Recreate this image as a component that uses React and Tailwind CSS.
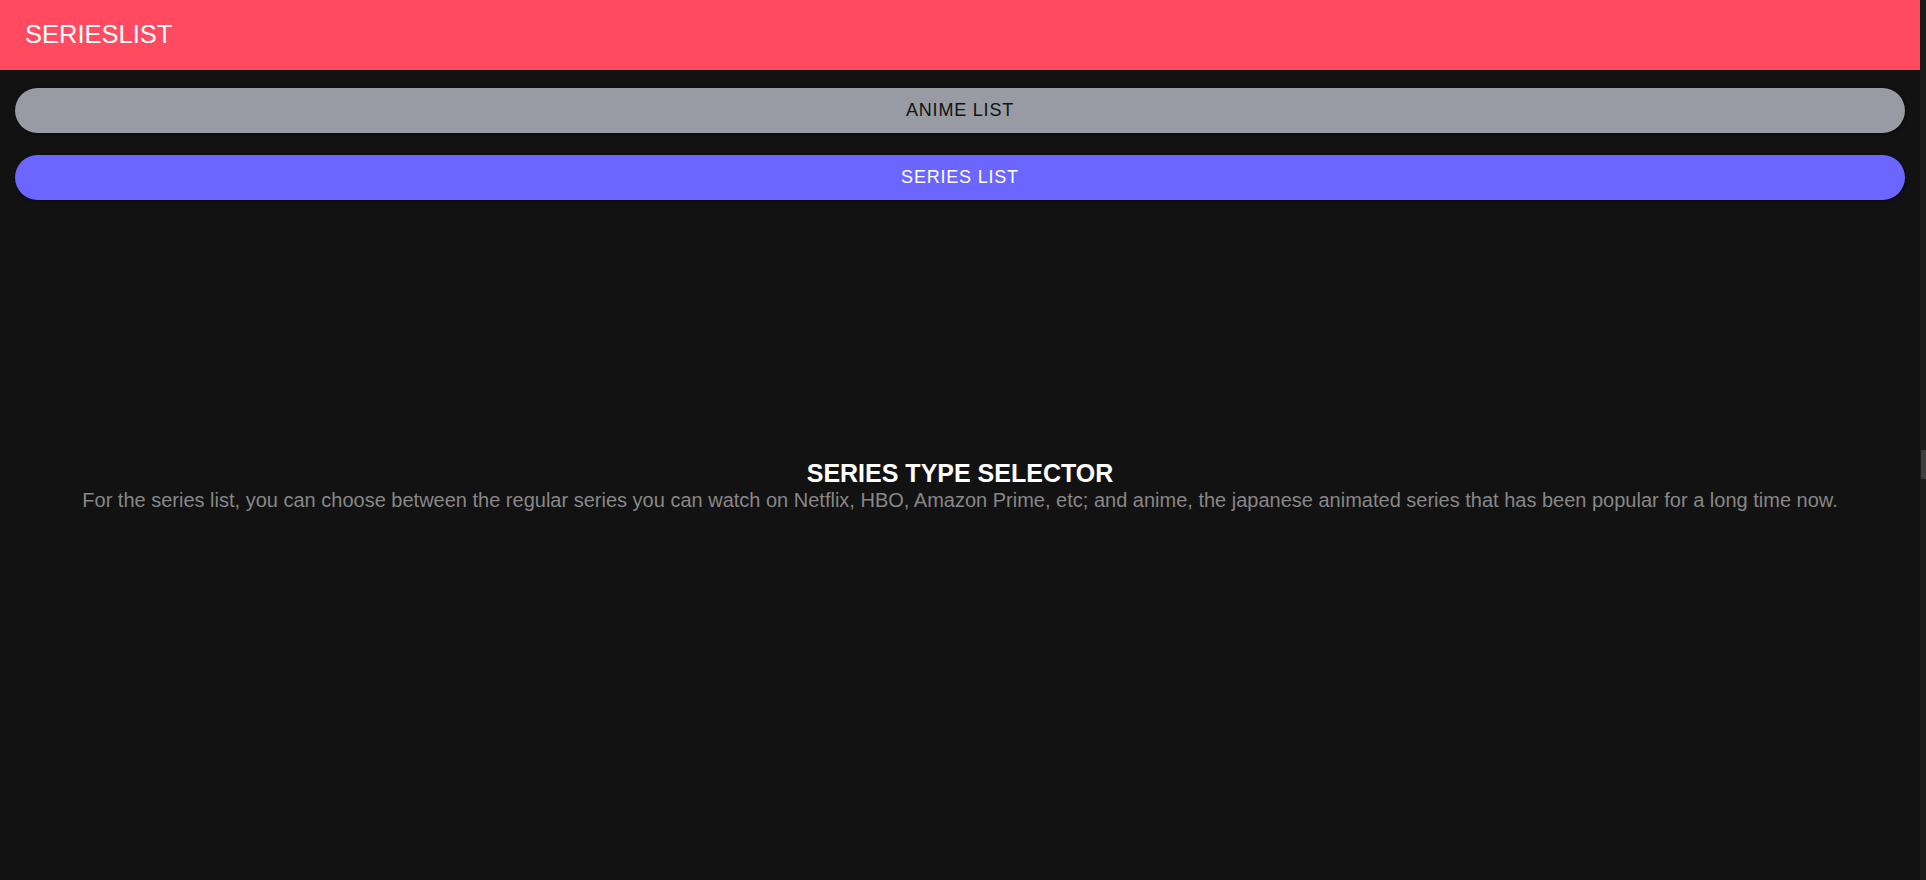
export default function App() {
  const font = { fontFamily: '"Liberation Sans", Arial, sans-serif' };
  return (
    <div className="flex h-[880px] w-[1926px] overflow-hidden bg-[#121212]" style={font}>
      <div className="flex w-[1920px] flex-col">
        <header className="flex h-[70px] items-center bg-[#ff4a60] px-[25px]">
          <span className="text-[25.5px] leading-none text-white">SERIESLIST</span>
        </header>
        <div className="flex flex-col gap-[22px] px-[15px] pt-[18px]">
          <button className="flex h-[45px] w-full items-center justify-center rounded-full bg-[#989ba3] text-[18px] tracking-[0.8px] text-[#121212] shadow-[1px_1px_3px_rgba(0,0,0,0.5)]">
            ANIME LIST
          </button>
          <button className="flex h-[45px] w-full items-center justify-center rounded-full bg-[#6b66ff] text-[18px] tracking-[0.8px] text-white shadow-[1px_1px_3px_rgba(0,0,0,0.5)]">
            SERIES LIST
          </button>
        </div>
        <div className="mt-[258px] flex flex-col items-center text-center">
          <h2 className="text-[25px] font-bold leading-[30px] text-white">SERIES TYPE SELECTOR</h2>
          <p className="text-[20px] leading-[24px] text-[#878787]">
            For the series list, you can choose between the regular series you can watch on Netflix, HBO, Amazon Prime, etc; and anime, the japanese animated series that has been popular for a long time now.
          </p>
        </div>
      </div>
      <div className="flex w-[6px] flex-col bg-[#1c1c1c] pt-[450px]">
        <div className="ml-[1px] h-[29px] w-[5px] bg-[#3e3e3e]" />
      </div>
    </div>
  );
}
